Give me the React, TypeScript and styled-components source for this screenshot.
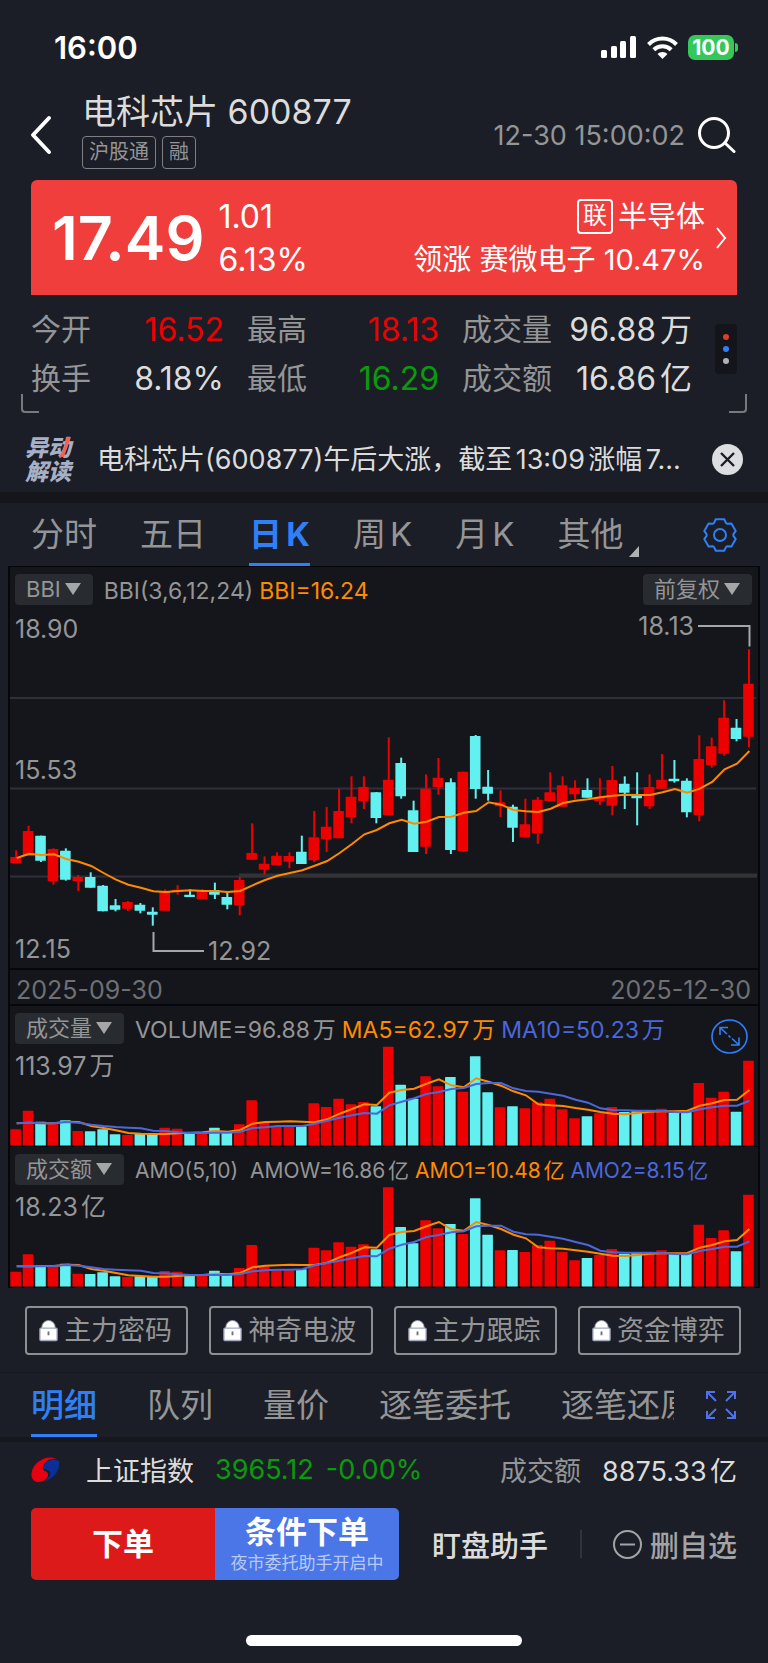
import React from 'react';
import styled, { createGlobalStyle, css } from 'styled-components';

const color = {
  page: '#1b1e26',
  panel: '#15161b',
  line: '#06070b',
  text: '#dcdcdc',
  muted: '#949596',
  rise: '#ec0000',
  fall: '#0a9a0e',
  candleFall: '#63f0f0',
  blue: '#2f80f6',
  orange: '#ff8a00',
  indigo: '#4b67dc',
};

const GlobalStyle = createGlobalStyle`
  * { box-sizing: border-box; }
  body {
    margin: 0;
    background: ${color.page};
    color: ${color.text};
    font-family: Inter, "Noto Sans CJK SC", sans-serif;
    text-autospace: normal;
  }
  button {
    margin: 0;
    padding: 0;
    border: 0;
    background: none;
    color: inherit;
    font: inherit;
    cursor: pointer;
  }
  a { color: inherit; text-decoration: none; }
  svg { display: block; flex: none; }
`;

/* ---------- status bar ---------- */

const StatusBar = styled.div`
  display: flex;
  align-items: center;
  justify-content: space-between;
  height: 88px;
  padding: 6px 30px 0 54px;
`;

const Clock = styled.span`
  font-size: 31px;
  font-weight: 600;
  color: #fff;
`;

const StatusIcons = styled.div`
  display: flex;
  align-items: center;
  gap: 10px;
`;

const Battery = styled.span`
  position: relative;
  width: 46px;
  height: 25px;
  margin-right: 4px;
  border-radius: 7px;
  background: #34c759;
  color: #fff;
  font-size: 21px;
  font-weight: 700;
  line-height: 25px;
  text-align: center;

  &::after {
    content: '';
    position: absolute;
    right: -4px;
    top: 8px;
    width: 3px;
    height: 9px;
    border-radius: 0 3px 3px 0;
    background: #34c759;
  }
`;

/* ---------- header ---------- */

const Header = styled.header`
  display: flex;
  align-items: center;
  height: 92px;
  padding: 2px 32px 0 30px;
`;

const BackButton = styled.button`
  width: 52px;
`;

const Title = styled.div`
  flex: 1;
  display: flex;
  flex-direction: column;
  gap: 4px;
  padding-bottom: 9px;
`;

const StockName = styled.h1`
  margin: 0;
  font-size: 34px;
  font-weight: 400;
  line-height: 40px;
  white-space: nowrap;
`;

const Tags = styled.div`
  display: flex;
  gap: 6px;
`;

const Tag = styled.span`
  height: 33px;
  padding: 0 6px;
  border: 1px solid #7d7f84;
  border-radius: 4px;
  color: ${color.muted};
  font-size: 20px;
  line-height: 31px;
`;

const Timestamp = styled.time`
  margin-right: 12px;
  color: ${color.muted};
  font-size: 27px;
`;

/* ---------- price banner ---------- */

const Banner = styled.section`
  display: flex;
  align-items: center;
  height: 115px;
  margin: 0 31px;
  padding: 0 10px 0 21px;
  border-radius: 6px 6px 0 0;
  background: #f03e3c;
  color: #fff;
`;

const Price = styled.strong`
  font-size: 61px;
  font-weight: 600;
`;

const Change = styled.div`
  flex: 1;
  display: flex;
  flex-direction: column;
  margin-left: 14px;
  font-size: 32px;
  line-height: 43px;
`;

const SectorLink = styled.a`
  display: flex;
  align-items: center;
  gap: 10px;
`;

const SectorText = styled.span`
  display: flex;
  flex-direction: column;
  align-items: flex-end;
  font-size: 29px;
  line-height: 43px;
`;

const SectorName = styled.span`
  display: flex;
  align-items: center;
  gap: 5px;
`;

const LinkBadge = styled.span`
  width: 36px;
  height: 35px;
  border: 2px solid #fff;
  border-radius: 4px;
  font-size: 24px;
  line-height: 30px;
  text-align: center;
`;

/* ---------- quote figures ---------- */

const Quote = styled.section`
  position: relative;
  display: flex;
  align-items: center;
  margin: 0 21px;
  padding: 10px;
  height: 118px;
`;

const Figures = styled.dl`
  flex: 1;
  display: grid;
  grid-template-columns: 193fr 192fr 230fr;
  column-gap: 23px;
  margin: 0;
  font-size: 30px;
  line-height: 49px;
`;

const Figure = styled.div`
  display: flex;
  justify-content: space-between;
  white-space: nowrap;
`;

const FigureLabel = styled.dt`
  color: ${color.muted};
`;

const FigureValue = styled.dd<{ $tone?: string }>`
  margin: 0;
  color: ${(p) => p.$tone ?? color.text};
  font-size: 32px;
`;

const MoreButton = styled.button`
  display: flex;
  flex-direction: column;
  align-items: center;
  justify-content: center;
  gap: 6px;
  width: 22px;
  height: 50px;
  margin: 0 0 10px 23px;
  border-radius: 4px;
  background: #14151a;
`;

const Dot = styled.i<{ $tone: string }>`
  width: 6px;
  height: 6px;
  border-radius: 50%;
  background: ${(p) => p.$tone};
`;

const Corner = styled.i<{ $side: 'left' | 'right' }>`
  position: absolute;
  bottom: 0;
  ${(p) => p.$side}: 0;
  width: 18px;
  height: 19px;
  border-bottom: 2px solid #77797e;
  border-${(p) => p.$side}: 2px solid #77797e;
  border-bottom-${(p) => p.$side}-radius: 4px;
`;

/* ---------- news strip ---------- */

const NewsBar = styled.section`
  display: flex;
  align-items: center;
  height: 90px;
  padding: 14px 25px 0;
  border-bottom: 11px solid ${color.panel};
`;

const NewsLogo = styled.span`
  position: relative;
  display: flex;
  flex-direction: column;
  width: 72px;
  color: #a6b0c6;
  font-size: 23px;
  font-style: italic;
  font-weight: 900;
  line-height: 24px;

  svg {
    position: absolute;
    left: 34px;
    top: 1px;
  }
`;

const NewsText = styled.a`
  flex: 1;
  min-width: 0;
  overflow: hidden;
  font-size: 27px;
  line-height: 40px;
  text-overflow: ellipsis;
  white-space: nowrap;
`;

const CloseButton = styled.button`
  margin-left: 26px;
`;

/* ---------- tabs ---------- */

const PeriodTabs = styled.nav`
  display: flex;
  align-items: stretch;
  gap: 43px;
  height: 63px;
  padding: 0 31px;
`;

const Tab = styled.button<{ $active?: boolean; $strong?: boolean }>`
  position: relative;
  flex: none;
  padding-top: 3px;
  border-bottom: 3px solid transparent;
  color: ${color.muted};
  font-size: 33px;
  line-height: 57px;
  white-space: nowrap;
  ${(p) =>
    p.$active &&
    css`
      color: ${color.blue};
      border-bottom-color: ${color.blue};
      font-weight: ${p.$strong ? 700 : 500};
    `}
`;

const TabMark = styled.svg`
  position: absolute;
  right: -16px;
  bottom: 6px;
`;

const TabAction = styled.button`
  margin-left: auto;
`;

/* ---------- chart frame ---------- */

const ChartFrame = styled.section`
  margin: 0 8px;
  border: solid ${color.line};
  border-width: 1px 2px 0;
  background: ${color.panel};
`;

const Panel = styled.div<{ $edge: number }>`
  position: relative;
  border-bottom: ${(p) => p.$edge}px solid ${color.line};
`;

const PanelHead = styled.div`
  display: flex;
  align-items: center;
  height: 40px;
  padding: 6px 6px 2px 5px;
`;

const Picker = styled.button`
  display: flex;
  align-items: center;
  gap: 4px;
  height: 31px;
  padding: 0 12px 0 11px;
  border-radius: 4px;
  background: #282b30;
  color: ${color.muted};
  font-size: 22px;
  line-height: 30px;
  white-space: nowrap;
`;

const Legend = styled.div<{ $small?: boolean }>`
  flex: 1;
  display: flex;
  gap: 6px;
  padding: 4px 0 0 11px;
  color: ${color.muted};
  font-size: ${(p) => (p.$small ? 21 : 23)}px;
  line-height: 30px;
  white-space: nowrap;
`;

const LegendItem = styled.span<{ $tone?: string; $wide?: boolean }>`
  color: ${(p) => p.$tone ?? 'inherit'};
  margin-right: ${(p) => (p.$wide ? 6 : 0)}px;
`;

const Chart = styled.svg`
  width: 100%;
  height: auto;
  overflow: visible;

  text {
    fill: ${color.muted};
    font-size: 25px;
  }
`;

const DateRow = styled.div`
  display: flex;
  justify-content: space-between;
  height: 36px;
  padding: 0 7px 0 6px;
  border-bottom: 2px solid ${color.line};
  color: #6e7074;
  font-size: 25px;
  line-height: 40px;
`;

const ZoomButton = styled.button`
  position: absolute;
  right: 10px;
  top: 13px;
`;

/* ---------- paid tools ---------- */

const ToolRow = styled.section`
  display: grid;
  grid-template-columns: repeat(4, 1fr);
  gap: 21px;
  padding: 18px 27px 17px 25px;
  border-bottom: 1px solid #16181e;
`;

const ToolButton = styled.button`
  display: flex;
  align-items: center;
  justify-content: center;
  gap: 6px;
  height: 49px;
  padding-right: 2px;
  border: 2px solid #8d8f93;
  border-radius: 4px;
  color: ${color.muted};
  font-size: 27px;
  line-height: 45px;
  white-space: nowrap;
`;

/* ---------- detail tabs ---------- */

const DetailBar = styled.nav`
  display: flex;
  align-items: center;
  justify-content: space-between;
  height: 69px;
  padding: 0 32px 0 31px;
  border-bottom: 5px solid #16181e;
`;

const DetailTabs = styled.div`
  flex: 1;
  display: flex;
  gap: 50px;
  height: 64px;
  margin-right: 32px;
  overflow: hidden;
`;

/* ---------- index strip ---------- */

const IndexBar = styled.section`
  display: flex;
  align-items: center;
  height: 58px;
  padding: 0 31px 3px;
  font-size: 27px;
  white-space: nowrap;
`;

const IndexName = styled.span`
  margin: 0 21px 0 26px;
`;

const IndexQuote = styled.span`
  flex: 1;
  display: flex;
  gap: 12px;
  color: ${color.fall};
`;

const IndexLabel = styled.span`
  margin-right: 21px;
  color: ${color.muted};
`;

/* ---------- order bar ---------- */

const OrderBar = styled.footer`
  display: flex;
  align-items: center;
  padding: 8px 31px 0;
`;

const OrderButtons = styled.div`
  flex: none;
  display: grid;
  grid-template-columns: 184px 184px;
  height: 72px;
  border-radius: 5px;
  overflow: hidden;
  color: #fff;
`;

const OrderButton = styled.button<{ $fill: string }>`
  display: flex;
  flex-direction: column;
  align-items: center;
  justify-content: center;
  background: ${(p) => p.$fill};
  font-size: 31px;
  font-weight: 700;
  line-height: 38px;
`;

const OrderHint = styled.small`
  color: #b9c9f6;
  font-size: 17px;
  font-weight: 400;
  line-height: 24px;
`;

const TextButton = styled.button<{ $dim?: boolean }>`
  display: flex;
  align-items: center;
  gap: 8px;
  color: ${(p) => (p.$dim ? '#a3a4a6' : color.text)};
  font-size: 29px;
  font-weight: 500;
  white-space: nowrap;
`;

const OrderLinks = styled.div`
  flex: 1;
  display: flex;
  align-items: center;
  justify-content: space-between;
  margin-left: 33px;
`;

const Divider = styled.i`
  width: 2px;
  height: 28px;
  background: #30333c;
`;

const HomeIndicator = styled.div`
  width: 36%;
  height: 11px;
  margin: 55px auto 16px;
  border-radius: 6px;
  background: #fff;
`;

/* ---------- chart data: plot units, three to a pixel ---------- */

type Candle = [up: 0 | 1, high: number, top: number, bottom: number, low: number];

const candles: Candle[] = [
  [1, 872, 892, 911, 911], [1, 798, 814, 889, 889], [0, 828, 828, 903, 907], [1, 866, 868, 964, 975],
  [0, 866, 873, 960, 963], [1, 946, 952, 964, 994], [0, 938, 952, 984, 984], [0, 976, 978, 1055, 1055],
  [0, 1018, 1037, 1050, 1055], [1, 1024, 1027, 1047, 1054], [0, 1030, 1035, 1053, 1061], [0, 1043, 1056, 1065, 1098],
  [1, 989, 997, 1053, 1053], [1, 976, 990, 997, 1005], [0, 989, 1005, 1012, 1012], [1, 988, 992, 1019, 1019],
  [0, 969, 991, 1005, 1018], [0, 995, 1012, 1035, 1049], [1, 952, 961, 1037, 1067], [1, 791, 880, 900, 900],
  [1, 890, 912, 930, 944], [1, 878, 888, 917, 917], [1, 878, 889, 906, 926], [0, 828, 876, 913, 913],
  [1, 754, 833, 902, 907], [1, 742, 801, 839, 877], [1, 687, 754, 836, 836], [1, 650, 711, 773, 791],
  [1, 650, 682, 724, 748], [0, 697, 698, 775, 791], [1, 533, 660, 766, 766], [0, 594, 610, 710, 717],
  [0, 723, 752, 877, 877], [1, 644, 687, 861, 883], [1, 595, 654, 682, 705], [0, 656, 668, 871, 883],
  [1, 636, 636, 874, 877], [0, 526, 529, 688, 717], [0, 631, 681, 702, 723], [1, 692, 728, 740, 772],
  [0, 735, 741, 804, 847], [1, 717, 794, 833, 833], [1, 712, 720, 820, 852], [1, 638, 698, 724, 724],
  [1, 650, 677, 741, 741], [1, 662, 685, 704, 719], [0, 656, 691, 714, 714], [1, 656, 711, 724, 736],
  [1, 619, 661, 738, 767], [0, 650, 672, 699, 748], [0, 638, 707, 716, 797], [1, 644, 682, 740, 748],
  [1, 583, 660, 687, 687], [0, 601, 657, 665, 669], [0, 656, 663, 758, 773], [1, 527, 598, 766, 785],
  [1, 534, 560, 616, 624], [1, 422, 474, 582, 588], [0, 478, 504, 538, 545], [1, 269, 372, 531, 563],
];

const bbi = [
  895, 882, 886, 884, 898, 906, 919, 940, 960, 975, 984, 995, 997, 994, 992, 994, 994, 997, 994, 977,
  961, 948, 940, 932, 918, 904, 880, 853, 824, 811, 791, 780, 792, 786, 772, 771, 759, 754, 728, 735,
  751, 755, 757, 747, 730, 723, 719, 713, 708, 705, 706, 706, 698, 688, 699, 687, 667, 629, 612, 574,
];

const volume = {
  top: 260,
  bars: [
    510, 454, 487, 492, 483, 515, 516, 510, 525, 527, 524, 526, 505, 508, 523, 524, 505, 520, 495, 423,
    487, 502, 502, 501, 432, 443, 418, 435, 428, 441, 262, 376, 418, 351, 381, 353, 397, 291, 399, 444,
    441, 447, 429, 418, 450, 477, 471, 462, 443, 458, 456, 458, 448, 460, 456, 371, 415, 397, 457, 304,
  ],
  fast: [
    492, 490, 492, 492, 487, 488, 500, 506, 513, 521, 523, 524, 524, 522, 520, 519, 515, 517, 512, 493,
    488, 487, 486, 487, 489, 480, 463, 449, 435, 437, 400, 392, 388, 373, 360, 378, 384, 357, 367, 379,
    396, 408, 435, 438, 440, 446, 451, 458, 463, 465, 461, 457, 456, 456, 454, 439, 432, 422, 421, 392,
  ],
  slow: [
    492, 490, 492, 492, 488, 490, 496, 500, 503, 505, 507, 514, 515, 519, 521, 521, 520, 520, 517, 506,
    504, 500, 500, 500, 493, 484, 475, 468, 461, 463, 438, 427, 417, 404, 398, 389, 386, 374, 371, 371,
    387, 395, 397, 403, 409, 421, 430, 447, 452, 453, 454, 454, 455, 458, 459, 450, 444, 439, 439, 424,
  ],
};

const amount = {
  top: 684,
  bars: [
    938, 886, 918, 923, 914, 944, 945, 940, 952, 954, 952, 954, 936, 938, 950, 950, 935, 948, 927, 858,
    922, 932, 932, 931, 866, 874, 850, 863, 856, 871, 685, 804, 853, 784, 808, 795, 825, 718, 827, 874,
    873, 879, 858, 845, 878, 904, 897, 888, 870, 884, 882, 884, 874, 886, 884, 797, 837, 814, 877, 707,
  ],
  fast: [
    922, 922, 921, 921, 917, 918, 930, 935, 942, 949, 951, 953, 953, 951, 949, 948, 944, 946, 942, 925,
    920, 919, 917, 918, 918, 911, 895, 881, 865, 866, 828, 819, 816, 802, 789, 811, 815, 789, 798, 810,
    827, 838, 865, 868, 869, 874, 878, 884, 890, 891, 888, 884, 883, 883, 882, 866, 858, 847, 843, 810,
  ],
  slow: [
    922, 921, 922, 921, 918, 920, 925, 930, 932, 934, 935, 942, 943, 946, 948, 948, 948, 948, 945, 937,
    934, 932, 932, 931, 919, 912, 905, 898, 891, 892, 869, 857, 849, 834, 828, 820, 817, 802, 800, 800,
    818, 826, 827, 833, 839, 849, 858, 875, 880, 881, 881, 881, 882, 885, 886, 876, 870, 863, 863, 847,
  ],
};

const UNIT = 3;
const PRICE_TOP = 142;
const centre = (i: number) => (17 + i * 37.26) / UNIT;
const polyline = (values: number[], top: number) =>
  values.map((v, i) => `${(centre(i) + 1).toFixed(1)},${((v - top) / UNIT).toFixed(1)}`).join(' ');
const tone = (up: 0 | 1) => (up ? color.rise : color.candleFall);

function PriceChart() {
  const y = (v: number) => (v - PRICE_TOP) / UNIT;
  return (
    <Chart viewBox="0 0 748 361" role="img" aria-label="日K">
      <g stroke="#2f303b" strokeWidth="2">
        <path d="M0 91H746M0 181.500H746M0 269.500H746" />
        <path d="M229 268.500H747" stroke="#333335" strokeWidth="4" />
      </g>
      {candles.map(([up, high, top, bottom, low], i) => (
        <g key={i} fill={tone(up)}>
          <rect x={centre(i) - 0.5} y={y(high)} width="2" height={(low - high) / UNIT} />
          <rect x={centre(i) - 5.3} y={y(top)} width="10.600" height={(bottom - top) / UNIT} rx="0.500" />
        </g>
      ))}
      <polyline points={polyline(bbi, PRICE_TOP)} fill="none" stroke={color.orange} strokeWidth="2" />
      <path d="M143.500 325V344H194M688 19H739.500V39.500" fill="none" stroke="#a5a6a8" strokeWidth="2" />
      <text x="5" y="31">18.90</text>
      <text x="5" y="172">15.53</text>
      <text x="5" y="351">12.15</text>
      <text x="198" y="353">12.92</text>
      <text x="684" y="28" textAnchor="end">18.13</text>
    </Chart>
  );
}

function BarChart({ data, peak, label }: { data: typeof volume; peak: string; label: string }) {
  return (
    <Chart viewBox="0 0 748 100" role="img" aria-label={label}>
      {data.bars.map((v, i) => {
        const y = (v - data.top) / UNIT;
        return <rect key={i} x={centre(i) - 5.3} y={y} width="10.600" height={99.5 - y} rx="0.500" fill={tone(candles[i][0])} />;
      })}
      <polyline points={polyline(data.fast, data.top)} fill="none" stroke={color.orange} strokeWidth="2" />
      <polyline points={polyline(data.slow, data.top)} fill="none" stroke={color.indigo} strokeWidth="2" />
      <text x="5" y="29">{peak}</text>
    </Chart>
  );
}

/* ---------- icons ---------- */

const SignalIcon = () => (
  <svg width="36" height="23" viewBox="0 0 36 23" fill="#fff">
    <rect x="0" y="14" width="6" height="8" rx="1.500" />
    <rect x="10" y="10" width="6" height="12" rx="1.500" />
    <rect x="19" y="5" width="6" height="17" rx="1.500" />
    <rect x="29" y="0" width="6" height="22" rx="1.500" />
  </svg>
);

const WifiIcon = () => (
  <svg width="31" height="23" viewBox="0 0 31 23" fill="none" stroke="#fff" strokeWidth="4">
    <path d="M1.500 8.500A19.500 19.500 0 0 1 29.500 8.500" />
    <path d="M6.800 13.800A12.500 12.500 0 0 1 24.200 13.800" />
    <path d="M15.500 23 10.500 18A7 7 0 0 1 20.500 18Z" fill="#fff" stroke="none" />
  </svg>
);

const BackIcon = () => (
  <svg width="24" height="40" viewBox="0 0 24 40" fill="none" stroke="#fff" strokeWidth="4" strokeLinecap="round" strokeLinejoin="round">
    <path d="M19 3 3 20 19 37" />
  </svg>
);

const SearchIcon = () => (
  <svg width="39" height="36" viewBox="0 0 39 36" fill="none" stroke="#fff" strokeWidth="3" strokeLinecap="round">
    <circle cx="17" cy="16" r="14.500" />
    <path d="M28 26 37 34.500" />
  </svg>
);

const ChevronIcon = () => (
  <svg width="12" height="22" viewBox="0 0 12 22" fill="none" stroke="#fff" strokeWidth="2">
    <path d="M2 1 10 11 2 21" />
  </svg>
);

const CloseIcon = () => (
  <svg width="31" height="31" viewBox="0 0 31 31">
    <circle cx="15.500" cy="15.500" r="15.500" fill="#dcdee2" />
    <path d="M9 9 22 22M22 9 9 22" stroke="#1b1e26" strokeWidth="2.400" />
  </svg>
);

const toothPoints = [[-18, -36], [-13, -47], [13, -47], [18, -36]];
const gearPoints = Array.from({ length: 6 }, (_, k) => (k * Math.PI) / 3)
  .flatMap((a) => toothPoints.map(([x, y]) => [x * Math.cos(a) - y * Math.sin(a), x * Math.sin(a) + y * Math.cos(a)]))
  .map(([x, y]) => `${x.toFixed(1)},${y.toFixed(1)}`)
  .join(' ');

const GearIcon = () => (
  <svg width="34" height="34" viewBox="-51 -51 102 102" fill="none" stroke={color.blue} strokeWidth="6" strokeLinejoin="round">
    <polygon points={gearPoints} />
    <circle r="18" />
  </svg>
);

const Triangle = () => (
  <svg width="16" height="12" viewBox="0 0 16 12" fill="#a5a6a8">
    <path d="M0 0H16L8 12Z" />
  </svg>
);

const DiagonalIcon = () => (
  <svg width="37" height="35" viewBox="0 0 37 35" fill="none" stroke={color.blue} strokeWidth="1.600">
    <ellipse cx="18.500" cy="17.500" rx="17.500" ry="16.500" />
    <path d="M9 16V8.500H17M9 8.500 16 15M17.500 16.500 19.500 18.500M21 19.500 28 26M28 18.500V26H20" />
  </svg>
);

const LockIcon = () => (
  <svg width="19" height="23" viewBox="0 0 20 23">
    <path d="M3 10V8A7 7 0 0 1 17 8V10Z" fill="#fff" stroke="#8f97a8" strokeWidth="1" />
    <rect x="1" y="9" width="18" height="13" rx="1" fill="#fff" stroke="#a5acc0" strokeWidth="1.400" />
    <path d="M10 12.500V16.500" stroke="#6c7280" strokeWidth="2" />
  </svg>
);

const ExpandIcon = () => (
  <svg width="30" height="30" viewBox="0 0 30 30" fill="none" stroke="#4f71ee" strokeWidth="2">
    <path d="M1 9V2H9M1 2 10 11M21 2H29V9M29 2 20 11M1 21V28H9M1 28 10 19M29 21V28H21M29 28 20 19" />
  </svg>
);

const ExchangeLogo = () => (
  <svg width="29" height="26" viewBox="0 0 87 78">
    <path d="M78 7C58-5 26 3 8 30-5 52 2 75 22 75 40 75 53 63 51 50 50 44 41 43 37 39 32 28 42 10 62 6 69 5 74 5 78 7Z" fill="#e60012" />
    <path d="M84 12C88 40 70 66 36 75 52 66 60 54 57 45 54 38 38 40 38 29 40 14 62 1 84 12Z" fill="#0a2f96" />
  </svg>
);

const MinusIcon = () => (
  <svg width="29" height="29" viewBox="0 0 29 29" fill="none" stroke="#a3a4a6" strokeWidth="2">
    <circle cx="14.500" cy="14.500" r="13.500" />
    <path d="M7 14.500H22" />
  </svg>
);

/* ---------- page ---------- */

const figures: [string, string, string?][] = [
  ['今开', '16.52', color.rise],
  ['最高', '18.13', color.rise],
  ['成交量', '96.88万'],
  ['换手', '8.18%'],
  ['最低', '16.29', color.fall],
  ['成交额', '16.86亿'],
];

export default function App() {
  return (
    <>
      <GlobalStyle />
      <StatusBar>
        <Clock>16:00</Clock>
        <StatusIcons>
          <SignalIcon />
          <WifiIcon />
          <Battery>100</Battery>
        </StatusIcons>
      </StatusBar>

      <Header>
        <BackButton aria-label="返回"><BackIcon /></BackButton>
        <Title>
          <StockName>电科芯片 600877</StockName>
          <Tags>
            <Tag>沪股通</Tag>
            <Tag>融</Tag>
          </Tags>
        </Title>
        <Timestamp>12-30 15:00:02</Timestamp>
        <button aria-label="搜索"><SearchIcon /></button>
      </Header>

      <main>
        <Banner>
          <Price>17.49</Price>
          <Change>
            <span>1.01</span>
            <span>6.13%</span>
          </Change>
          <SectorLink href="#sector">
            <SectorText>
              <SectorName><LinkBadge>联</LinkBadge>半导体</SectorName>
              <span>领涨 赛微电子 10.47%</span>
            </SectorText>
            <ChevronIcon />
          </SectorLink>
        </Banner>

        <Quote>
          <Figures>
            {figures.map(([label, value, valueTone]) => (
              <Figure key={label}>
                <FigureLabel>{label}</FigureLabel>
                <FigureValue $tone={valueTone}>{value}</FigureValue>
              </Figure>
            ))}
          </Figures>
          <MoreButton aria-label="更多">
            <Dot $tone="#d8402a" />
            <Dot $tone={color.blue} />
            <Dot $tone="#b0b1b3" />
          </MoreButton>
          <Corner $side="left" />
          <Corner $side="right" />
        </Quote>

        <NewsBar>
          <NewsLogo>
            <span>异动</span>
            <span>解读</span>
            <svg width="12" height="20" viewBox="0 0 12 20"><path d="M7 0H12L5 20H0Q6 12 7 0Z" fill="#f4614f" /></svg>
          </NewsLogo>
          <NewsText href="#news">电科芯片(600877)午后大涨，截至13:09涨幅7...</NewsText>
          <CloseButton aria-label="关闭"><CloseIcon /></CloseButton>
        </NewsBar>

        <PeriodTabs>
          <Tab>分时</Tab>
          <Tab>五日</Tab>
          <Tab $active $strong>日K</Tab>
          <Tab>周K</Tab>
          <Tab>月K</Tab>
          <Tab>
            其他
            <TabMark width="10" height="11" viewBox="0 0 10 11"><path d="M10 0V11H0Z" fill="#b0b1b3" /></TabMark>
          </Tab>
          <TabAction aria-label="设置"><GearIcon /></TabAction>
        </PeriodTabs>

        <ChartFrame>
          <Panel $edge={2}>
            <PanelHead>
              <Picker>BBI<Triangle /></Picker>
              <Legend>
                <LegendItem>BBI(3,6,12,24)</LegendItem>
                <LegendItem $tone={color.orange}>BBI=16.24</LegendItem>
              </Legend>
              <Picker>前复权<Triangle /></Picker>
            </PanelHead>
            <PriceChart />
          </Panel>
          <DateRow>
            <time>2025-09-30</time>
            <time>2025-12-30</time>
          </DateRow>
          <Panel $edge={1}>
            <PanelHead>
              <Picker>成交量<Triangle /></Picker>
              <Legend>
                <LegendItem>VOLUME=96.88万</LegendItem>
                <LegendItem $tone={color.orange}>MA5=62.97万</LegendItem>
                <LegendItem $tone={color.indigo}>MA10=50.23万</LegendItem>
              </Legend>
            </PanelHead>
            <BarChart data={volume} peak="113.97万" label="成交量" />
            <ZoomButton aria-label="放大"><DiagonalIcon /></ZoomButton>
          </Panel>
          <Panel $edge={1}>
            <PanelHead>
              <Picker>成交额<Triangle /></Picker>
              <Legend $small>
                <LegendItem $wide>AMO(5,10)</LegendItem>
                <LegendItem>AMOW=16.86亿</LegendItem>
                <LegendItem $tone={color.orange}>AMO1=10.48亿</LegendItem>
                <LegendItem $tone={color.indigo}>AMO2=8.15亿</LegendItem>
              </Legend>
            </PanelHead>
            <BarChart data={amount} peak="18.23亿" label="成交额" />
          </Panel>
        </ChartFrame>

        <ToolRow>
          {['主力密码', '神奇电波', '主力跟踪', '资金博弈'].map((name) => (
            <ToolButton key={name}><LockIcon />{name}</ToolButton>
          ))}
        </ToolRow>

        <DetailBar>
          <DetailTabs>
            <Tab $active>明细</Tab>
            <Tab>队列</Tab>
            <Tab>量价</Tab>
            <Tab>逐笔委托</Tab>
            <Tab>逐笔还原</Tab>
          </DetailTabs>
          <button aria-label="展开"><ExpandIcon /></button>
        </DetailBar>

        <IndexBar>
          <ExchangeLogo />
          <IndexName>上证指数</IndexName>
          <IndexQuote><span>3965.12</span><span>-0.00%</span></IndexQuote>
          <IndexLabel>成交额</IndexLabel>
          <span>8875.33亿</span>
        </IndexBar>
      </main>

      <OrderBar>
        <OrderButtons>
          <OrderButton $fill="#dc1a1a">下单</OrderButton>
          <OrderButton $fill="#4a76e8">
            条件下单
            <OrderHint>夜市委托助手开启中</OrderHint>
          </OrderButton>
        </OrderButtons>
        <OrderLinks>
          <TextButton>盯盘助手</TextButton>
          <Divider />
          <TextButton $dim><MinusIcon />删自选</TextButton>
        </OrderLinks>
      </OrderBar>
      <HomeIndicator />
    </>
  );
}
